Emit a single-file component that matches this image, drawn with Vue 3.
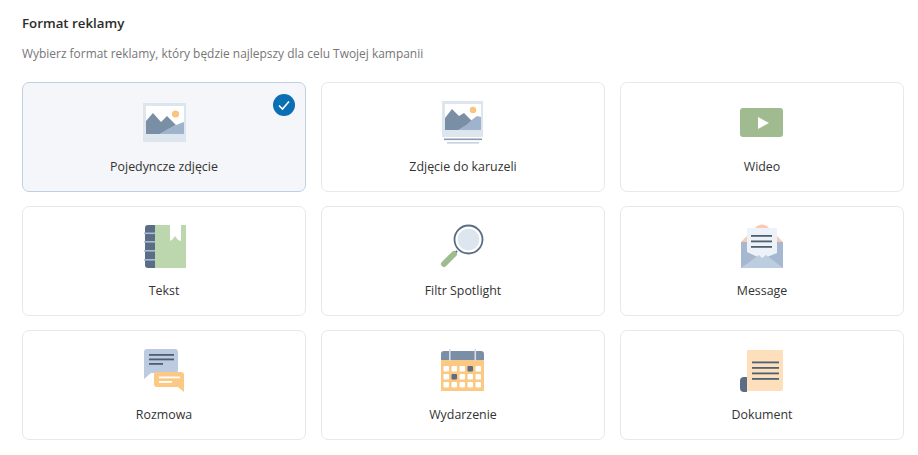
<script setup>
import { ref } from 'vue'

const selected = ref('single')

// dx/dy nudge each drawing inside its 70x60 box
const formats = [
  { id: 'single', label: 'Pojedyncze zdjęcie', dx: 1, dy: 0 },
  { id: 'carousel', label: 'Zdjęcie do karuzeli', dx: 2, dy: 0 },
  { id: 'video', label: 'Wideo', dx: 3, dy: 5 },
  { id: 'text', label: 'Tekst', dx: 1, dy: 1 },
  { id: 'spotlight', label: 'Filtr Spotlight', dx: 2, dy: 1 },
  { id: 'message', label: 'Message', dx: 3, dy: 1 },
  { id: 'conversation', label: 'Rozmowa', dx: 1, dy: 2 },
  { id: 'event', label: 'Wydarzenie', dx: 2, dy: 2 },
  { id: 'document', label: 'Dokument', dx: 3, dy: 2 }
]

const calendarCols = [13.5, 21.5, 29.5, 37.5, 45.5]
const calendarRows = [26, 34, 42]
const isDark = (c, r) => (c === 3 && r === 0) || (c === 1 && r === 1)
</script>

<template>
  <div class="page">
    <h2 class="title">Format reklamy</h2>
    <p class="subtitle">Wybierz format reklamy, który będzie najlepszy dla celu Twojej kampanii</p>
    <div class="grid">
      <button
        v-for="f in formats"
        :key="f.id"
        class="card"
        :class="{ active: selected === f.id }"
        @click="selected = f.id"
      >
        <span v-if="selected === f.id" class="check">
          <svg width="22" height="22" viewBox="0 0 22 22">
            <circle cx="11" cy="11" r="11" fill="#0a6fb3" />
            <path d="M6 11.5l3.5 3.5L16 7.5" fill="none" stroke="#fff" stroke-width="1.6" />
          </svg>
        </span>

        <svg class="icon" width="70" height="60" viewBox="0 0 70 60">
          <g :transform="`translate(${f.dx} ${f.dy})`">
            <g v-if="f.id === 'single'">
              <rect x="13" y="13" width="43" height="39" fill="#dde5ef" />
              <rect x="16" y="16" width="38" height="28" fill="#fff" />
              <circle cx="45.5" cy="24" r="3.6" fill="#f9c57e" />
              <path d="M16 31l7-8 8 9 6-6 9 9-16 9H16z" fill="#7a8ea6" />
              <path d="M29 44l9-5 8-4 8-3v12z" fill="#9fb3cc" />
            </g>

            <g v-else-if="f.id === 'carousel'">
              <rect x="12" y="11" width="41" height="36" fill="#dde5ef" />
              <rect x="15" y="14" width="36" height="26" fill="#fff" />
              <circle cx="43" cy="20" r="3.2" fill="#f9c57e" />
              <path d="M15 28l7-9 7 7 5-3 9 9-14 8H15z" fill="#7a8ea6" />
              <path d="M28 40l8-5 7-6 4-3 4 1v13z" fill="#9fb3cc" />
              <rect x="14" y="48.500" width="38" height="1.600" fill="#8a9bb0" />
              <rect x="17" y="52" width="32" height="1.600" fill="#c3d1e3" />
            </g>

            <g v-else-if="f.id === 'video'">
              <rect x="10" y="13" width="43" height="29" rx="3" fill="#9fbb8f" />
              <path d="M28 22l11 6-11 6z" fill="#fff" />
            </g>

            <g v-else-if="f.id === 'text'">
              <path d="M25 10h-7a3 3 0 0 0-3 3v37a3 3 0 0 0 3 3h7z" fill="#5a6d84" />
              <rect x="25" y="10" width="31" height="43" fill="#bcd6ad" />
              <path d="M40 10h11v16l-3-1-3-4-2 3-3 2z" fill="#fff" />
              <rect x="14" y="17.500" width="11" height="1.600" fill="#a9bcd6" />
              <rect x="14" y="26" width="11" height="1.600" fill="#a9bcd6" />
              <rect x="14" y="35" width="11" height="1.600" fill="#a9bcd6" />
              <rect x="14" y="44" width="11" height="1.600" fill="#a9bcd6" />
            </g>

            <g v-else-if="f.id === 'spotlight'">
              <path d="M27 36l-3 3" stroke="#5a6d84" stroke-width="2" />
              <path d="M24 39L14 49" stroke="#9fbb8f" stroke-width="6" stroke-linecap="round" />
              <circle cx="38.500" cy="24.500" r="14" fill="#fff" stroke="#5a6d84" stroke-width="1.800" />
              <circle cx="38.500" cy="24.500" r="10.800" fill="#dde5ef" />
            </g>

            <g v-else-if="f.id === 'message'">
              <path d="M11 27L27 11q5-3 10 0l16 16z" fill="#fbc9b0" />
              <rect x="11" y="27" width="42" height="26" fill="#a5b8cf" />
              <path d="M17 13h30v25l-15 6-15-7z" fill="#edf2f8" />
              <rect x="21" y="20" width="21" height="1.800" fill="#4f5f72" />
              <rect x="21" y="25.500" width="21" height="1.800" fill="#4f5f72" />
              <rect x="21" y="31" width="21" height="1.800" fill="#4f5f72" />
              <path d="M11 53l18-13 3 3 4-3 17 13z" fill="#bccde0" />
            </g>

            <g v-else-if="f.id === 'conversation'">
              <path d="M17 9h28a3 3 0 0 1 3 3v18a3 3 0 0 1-3 3H21l-7 6V12a3 3 0 0 1 3-3z" fill="#bccbe0" />
              <rect x="19" y="14" width="25" height="1.800" fill="#4f5f72" />
              <rect x="19" y="18.500" width="25" height="1.800" fill="#4f5f72" />
              <rect x="19" y="23" width="14" height="1.800" fill="#4f5f72" />
              <path d="M27 32h24a3 3 0 0 1 3 3v17l-6-5H27a3 3 0 0 1-3-3v-9a3 3 0 0 1 3-3z" fill="#fbc983" />
              <rect x="29" y="36.500" width="21" height="1.800" fill="#fff" />
              <rect x="29" y="41" width="13" height="1.800" fill="#fff" />
            </g>

            <g v-else-if="f.id === 'event'">
              <path d="M14 11h37a3 3 0 0 1 3 3v6H11v-6a3 3 0 0 1 3-3z" fill="#7a8ea6" />
              <rect x="11" y="20" width="43" height="31" fill="#fbc983" />
              <rect x="19" y="9" width="1.600" height="12" fill="#d5e0ec" />
              <rect x="44.500" y="9" width="1.600" height="12" fill="#d5e0ec" />
              <template v-for="(y, r) in calendarRows" :key="r">
                <rect
                  v-for="(x, c) in calendarCols"
                  :key="c"
                  :x="x"
                  :y="y"
                  width="5.500"
                  height="5.500"
                  rx="1"
                  :fill="isDark(c, r) ? '#5a6d84' : '#fff'"
                />
              </template>
            </g>

            <g v-else-if="f.id === 'document'">
              <path d="M17 10h36v39a2 2 0 0 1-2 2H17z" fill="#fde0bb" />
              <path d="M17 37h-3a4 4 0 0 0-4 4v7a4 4 0 0 0 4 4h3z" fill="#5a6d84" />
              <rect x="22" y="21.500" width="27" height="1.800" fill="#4f6175" />
              <rect x="22" y="27" width="27" height="1.800" fill="#4f6175" />
              <rect x="22" y="32.500" width="27" height="1.800" fill="#4f6175" />
              <rect x="22" y="38" width="27" height="1.800" fill="#4f6175" />
            </g>
          </g>
        </svg>

        <span class="label">{{ f.label }}</span>
      </button>
    </div>
  </div>
</template>

<style scoped>
.page {
  width: 918px;
  height: 455px;
  box-sizing: border-box;
  padding: 14px 14px 0 22px;
  background: #fff;
  font-family: "Open Sans", "Noto Sans", sans-serif;
}

.title {
  margin: 0;
  font-size: 13.3px;
  line-height: 18px;
  font-weight: 600;
  color: #2b2b2b;
}

.subtitle {
  margin: 13px 0 0;
  font-size: 11.95px;
  line-height: 18px;
  color: #767676;
}

.grid {
  margin-top: 19px;
  display: grid;
  grid-template-columns: repeat(3, 284px);
  grid-auto-rows: 110px;
  column-gap: 15px;
  row-gap: 14px;
}

.card {
  position: relative;
  display: flex;
  flex-direction: column;
  align-items: center;
  box-sizing: border-box;
  padding: 7px 0 0;
  background: #fff;
  border: 1px solid #e8e8e8;
  border-radius: 7px;
  font: inherit;
  cursor: pointer;
}

.card.active {
  background: #f4f6f9;
  border-color: #c0d0e4;
}

.check {
  position: absolute;
  top: 11px;
  right: 10px;
  width: 22px;
  height: 22px;
}

.icon {
  display: block;
}

.label {
  margin-top: 8px;
  font-size: 12.4px;
  line-height: 18px;
  color: #333;
}
</style>
